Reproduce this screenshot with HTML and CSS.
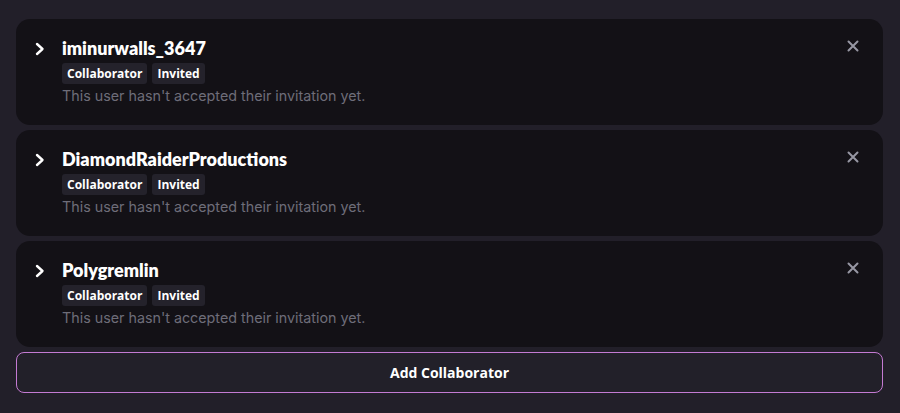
FILE: index.html
```html
<!DOCTYPE html>
<html>
<head>
<meta charset="utf-8">
<link rel="stylesheet" href="styles.css">
</head>
<body>
<div class="list">
  <div class="card">
    <svg class="chev" viewBox="0 0 12 14"><path d="M3 2 L8.5 7 L3 12" fill="none" stroke="#fff" stroke-width="2.4" stroke-linecap="round" stroke-linejoin="round"/></svg>
    <div class="info">
      <div class="name">iminurwalls_3647</div>
      <div class="badges"><span class="badge">Collaborator</span><span class="badge">Invited</span></div>
      <div class="desc">This user hasn't accepted their invitation yet.</div>
    </div>
    <svg class="close" viewBox="0 0 12 12"><path d="M1.5 1.5 L10.5 10.5 M10.5 1.5 L1.5 10.5" stroke="#9797a3" stroke-width="2" stroke-linecap="round"/></svg>
  </div>
  <div class="card">
    <svg class="chev" viewBox="0 0 12 14"><path d="M3 2 L8.5 7 L3 12" fill="none" stroke="#fff" stroke-width="2.4" stroke-linecap="round" stroke-linejoin="round"/></svg>
    <div class="info">
      <div class="name">DiamondRaiderProductions</div>
      <div class="badges"><span class="badge">Collaborator</span><span class="badge">Invited</span></div>
      <div class="desc">This user hasn't accepted their invitation yet.</div>
    </div>
    <svg class="close" viewBox="0 0 12 12"><path d="M1.5 1.5 L10.5 10.5 M10.5 1.5 L1.5 10.5" stroke="#9797a3" stroke-width="2" stroke-linecap="round"/></svg>
  </div>
  <div class="card">
    <svg class="chev" viewBox="0 0 12 14"><path d="M3 2 L8.5 7 L3 12" fill="none" stroke="#fff" stroke-width="2.4" stroke-linecap="round" stroke-linejoin="round"/></svg>
    <div class="info">
      <div class="name">Polygremlin</div>
      <div class="badges"><span class="badge">Collaborator</span><span class="badge">Invited</span></div>
      <div class="desc">This user hasn't accepted their invitation yet.</div>
    </div>
    <svg class="close" viewBox="0 0 12 12"><path d="M1.5 1.5 L10.5 10.5 M10.5 1.5 L1.5 10.5" stroke="#9797a3" stroke-width="2" stroke-linecap="round"/></svg>
  </div>
  <button class="add">Add Collaborator</button>
</div>
</body>
</html>
```

FILE: styles.css
```css
html, body {
  margin: 0;
  padding: 0;
  background: #221f29;
  font-family: "Lato", "Noto Sans", sans-serif;
}
.list {
  display: flex;
  flex-direction: column;
  gap: 5px;
  padding: 19px 17px 0 16px;
}
.card {
  background: #131116;
  border-radius: 14px;
  display: flex;
  align-items: flex-start;
  padding: 17px 24px 19px 18px;
  height: 70px;
}
.chev {
  width: 12px;
  height: 14px;
  margin-top: 6px;
  margin-right: 16px;
  flex: none;
}
.info {
  flex: 1;
  display: flex;
  flex-direction: column;
}
.name {
  color: #fff;
  font-weight: 800;
  font-size: 18px;
  line-height: 24px;
}
.badges {
  display: flex;
  gap: 5px;
  margin-top: 3px;
}
.badge {
  background: #24222b;
  color: #fff;
  font-family: "Open Sans", sans-serif;
  font-weight: 700;
  font-size: 12px;
  line-height: 21px;
  padding: 0 5px;
  border-radius: 3px;
}
.desc {
  color: #6e6d79;
  font-family: "Inter", "Noto Sans", sans-serif;
  font-size: 14.3px;
  line-height: 21px;
  margin-top: 1px;
}
.close {
  width: 12px;
  height: 12px;
  margin-top: 4px;
  flex: none;
}
.add {
  height: 41px;
  background: #222029;
  border: 1.5px solid #c47ad2;
  border-radius: 8px;
  color: #fff;
  font-family: "Open Sans", sans-serif;
  font-weight: 700;
  font-size: 14px;
}
```
